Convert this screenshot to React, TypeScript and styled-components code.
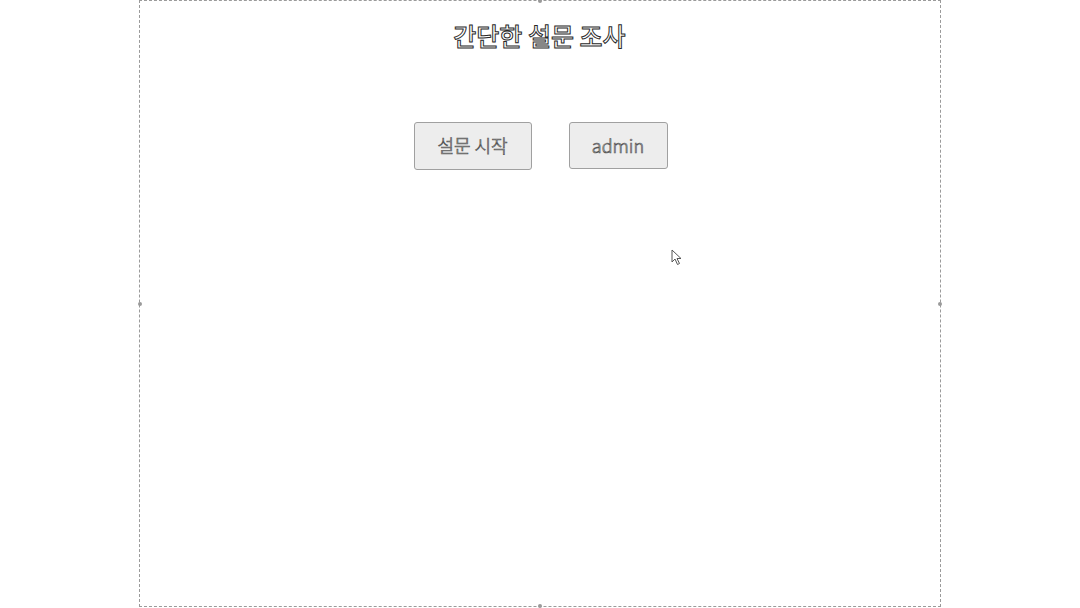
import React from "react";
import styled, { createGlobalStyle } from "styled-components";

const Global = createGlobalStyle`
  html, body { margin: 0; padding: 0; background: #ffffff; }
  body { font-family: "Noto Sans CJK KR", "Noto Sans", sans-serif; }
`;

const Page = styled.div`
  width: 1080px;
  height: 608px;
  display: flex;
  justify-content: center;
  align-items: flex-start;
`;

const Frame = styled.div`
  position: relative;
  width: 802px;
  height: 607px;
  margin-left: -1px;
  box-sizing: border-box;
  border: 1px dashed #9a9a9a;
  display: flex;
  flex-direction: column;
  align-items: center;
`;

const Handle = styled.span<{ $x: string; $y: string }>`
  position: absolute;
  left: ${(p) => p.$x};
  top: ${(p) => p.$y};
  width: 4px;
  height: 4px;
  margin: -2px 0 0 -2px;
  border-radius: 50%;
  background: #9a9a9a;
`;

const Title = styled.h1`
  margin: 18px 0 0;
  font-size: 25px;
  line-height: 32px;
  font-weight: 500;
  color: #ffffff;
  -webkit-text-stroke: 1px #2a2a2a;
`;

const Buttons = styled.div`
  display: flex;
  gap: 37px;
  margin-top: 71px;
  padding-left: 2px;
  align-items: flex-start;
`;

const Button = styled.button<{ $w: number; $h: number }>`
  width: ${(p) => p.$w}px;
  height: ${(p) => p.$h}px;
  box-sizing: border-box;
  background: #ededed;
  border: 1px solid #a0a0a0;
  border-radius: 3px;
  font-family: "Noto Sans CJK KR", "Noto Sans", sans-serif;
  font-size: 18px;
  font-weight: 300;
  color: #f4f4f4;
  -webkit-text-stroke: 0.7px #555;
  padding: 0 0 2px;
  cursor: default;
`;

const Cursor = styled.svg`
  position: absolute;
  left: 531px;
  top: 248px;
`;

export default function App() {
  return (
    <>
      <Global />
      <Page>
        <Frame>
          <Handle $x="50%" $y="0%" />
          <Handle $x="0%" $y="50%" />
          <Handle $x="100%" $y="50%" />
          <Handle $x="50%" $y="100%" />
          <Title>간단한 설문 조사</Title>
          <Buttons>
            <Button $w={118} $h={48}>설문 시작</Button>
            <Button $w={99} $h={47}>admin</Button>
          </Buttons>
          <Cursor width="12" height="18" viewBox="0 0 12 18">
            <path
              d="M1 1 L1 13 L4 10 L6.5 15.5 L8.5 14.5 L6 9.5 L10 9.5 Z"
              fill="#ffffff"
              stroke="#555"
              strokeWidth="1"
              strokeLinejoin="round"
            />
          </Cursor>
        </Frame>
      </Page>
    </>
  );
}
